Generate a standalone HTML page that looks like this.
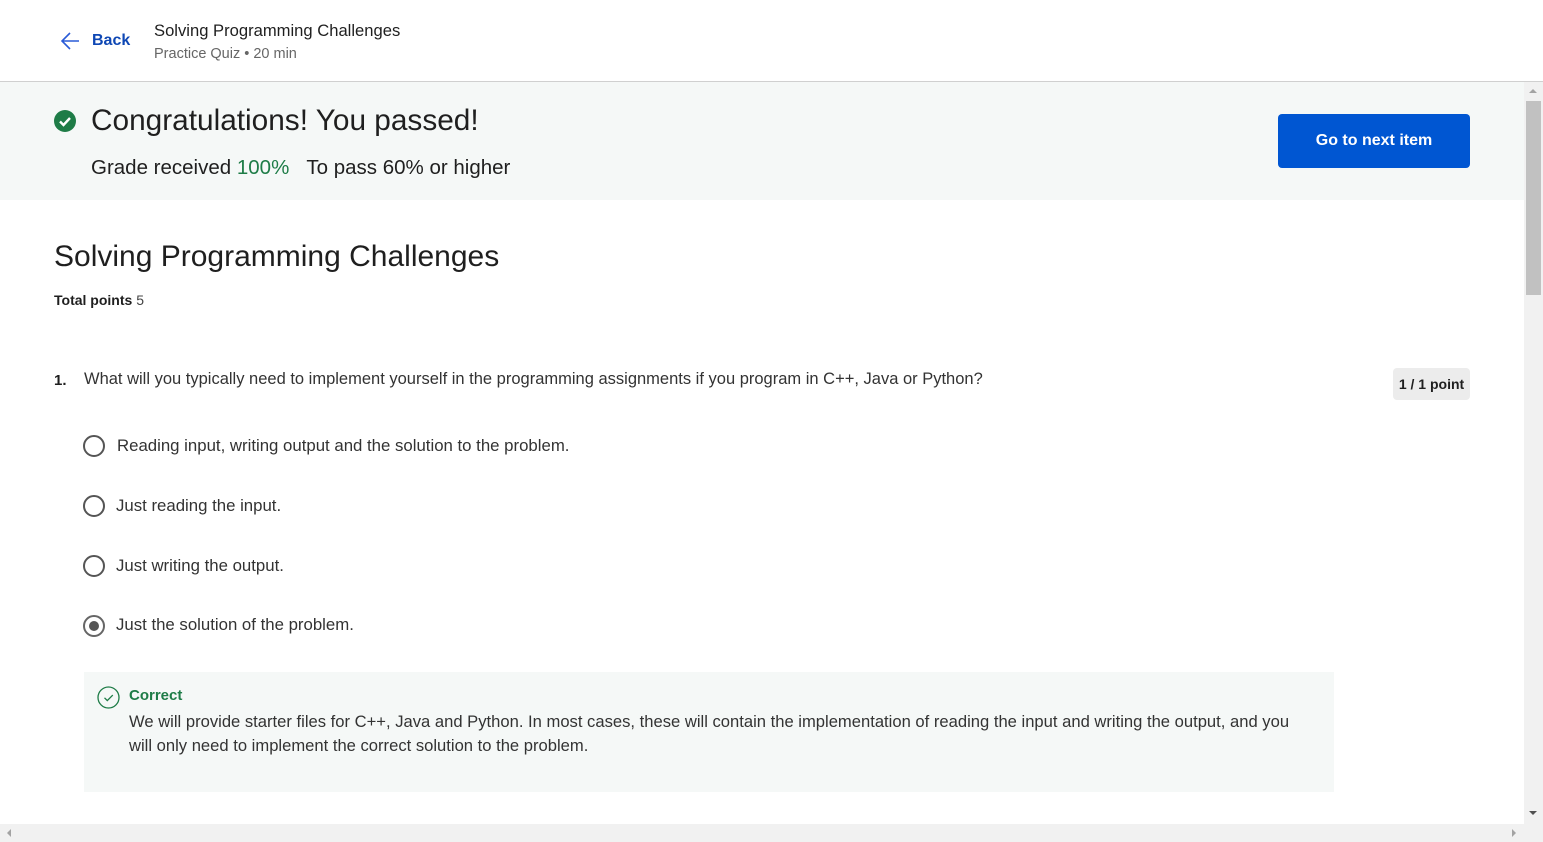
<!DOCTYPE html>
<html><head><meta charset="utf-8"><style>
*{margin:0;padding:0;box-sizing:border-box}
body{width:1543px;height:842px;overflow:hidden;background:#fff;font-family:"Liberation Sans",sans-serif;color:#1f1f1f;position:relative}
.a{position:absolute;white-space:nowrap}
.radio{position:absolute;width:22px;height:22px;border:2px solid #555;border-radius:50%}
.opt{font-size:16.8px;color:#333}
</style></head><body>
<div class="a" style="left:0;top:0;width:1543px;height:82px;border-bottom:1px solid #d0d0d0;background:#fff"></div>
<svg class="a" style="left:60px;top:31px" width="20" height="20" viewBox="0 0 20 20"><path d="M19 10H2M10 2L2 10l8 8" fill="none" stroke="#2a5bd7" stroke-width="1.6"/></svg>
<div class="a" style="left:92px;top:32px;font-size:16px;font-weight:bold;color:#0e47b4">Back</div>
<div class="a" style="left:154px;top:21px;font-size:16.6px;color:#1f1f1f">Solving Programming Challenges</div>
<div class="a" style="left:154px;top:46px;font-size:14.5px;color:#666">Practice Quiz • 20 min</div>

<div class="a" style="left:0;top:82px;width:1524px;height:118px;background:#f5f8f7"></div>
<svg class="a" style="left:54px;top:110px" width="22" height="22" viewBox="0 0 22 22"><circle cx="11" cy="11" r="11" fill="#1e7c47"/><path d="M6 11.5l3.5 3.5L16 8" fill="none" stroke="#fff" stroke-width="2.4"/></svg>
<div class="a" style="left:91px;top:104px;font-size:29.8px;color:#1f1f1f">Congratulations! You passed!</div>
<div class="a" style="left:91px;top:156px;font-size:20.5px;color:#1f1f1f">Grade received <span style="color:#1e7c47">100%</span>&nbsp;&nbsp;&nbsp;To pass 60% or higher</div>
<div class="a" style="left:1278px;top:114px;width:192px;height:54px;background:#0056d2;border-radius:4px;color:#fff;font-weight:bold;font-size:16px;text-align:center;line-height:54px">Go to next item</div>

<div class="a" style="left:54px;top:240px;font-size:30px;color:#1f1f1f">Solving Programming Challenges</div>
<div class="a" style="left:54px;top:292px;font-size:14px"><b>Total points</b> <span style="color:#444">5</span></div>

<div class="a" style="left:54px;top:372px;font-size:15px;font-weight:bold">1.</div>
<div class="a" style="left:84px;top:370px;font-size:16.5px;color:#333">What will you typically need to implement yourself in the programming assignments if you program in C++, Java or Python?</div>
<div class="a" style="left:1393px;top:368px;width:77px;height:32px;background:#ececec;border-radius:4px;font-size:14px;font-weight:bold;text-align:center;line-height:32px">1 / 1 point</div>

<div class="radio" style="left:83px;top:435px"></div><div class="a opt" style="left:117px;top:436px">Reading input, writing output and the solution to the problem.</div>
<div class="radio" style="left:83px;top:495px"></div><div class="a opt" style="left:116px;top:496px">Just reading the input.</div>
<div class="radio" style="left:83px;top:555px"></div><div class="a opt" style="left:116px;top:556px">Just writing the output.</div>
<div class="radio" style="left:83px;top:615px;border-color:#666"><div style="position:absolute;left:4px;top:4px;width:10px;height:10px;border-radius:50%;background:#555"></div></div><div class="a opt" style="left:116px;top:615px">Just the solution of the problem.</div>

<div class="a" style="left:84px;top:672px;width:1250px;height:120px;background:#f5f8f7"></div>
<svg class="a" style="left:97px;top:686px" width="23" height="23" viewBox="0 0 23 23"><circle cx="11.5" cy="11.5" r="10.5" fill="none" stroke="#1e7c47" stroke-width="1.3"/><path d="M7.5 11.8l2.8 2.8 5.5-5.5" fill="none" stroke="#1e7c47" stroke-width="1.3"/></svg>
<div class="a" style="left:129px;top:687px;font-size:15px;font-weight:bold;color:#1e7c47">Correct</div>
<div class="a" style="left:129px;top:710px;font-size:16.6px;color:#333;line-height:24px">We will provide starter files for C++, Java and Python. In most cases, these will contain the implementation of reading the input and writing the output, and you<br>will only need to implement the correct solution to the problem.</div>

<div class="a" style="left:1524px;top:82px;width:19px;height:742px;background:#f1f1f1"></div>
<div class="a" style="left:1526px;top:101px;width:15px;height:194px;background:#c1c1c1"></div>
<div class="a" style="left:1529px;top:89px;width:0;height:0;border:4px solid transparent;border-bottom-color:#a3a3a3;border-top:0"></div>
<div class="a" style="left:1529px;top:811px;width:0;height:0;border:4px solid transparent;border-top-color:#505050;border-bottom:0"></div>
<div class="a" style="left:0;top:824px;width:1543px;height:18px;background:#f1f1f1"></div>
<div class="a" style="left:7px;top:829px;width:0;height:0;border:4px solid transparent;border-right-color:#a3a3a3;border-left:0"></div>
<div class="a" style="left:1512px;top:829px;width:0;height:0;border:4px solid transparent;border-left-color:#a3a3a3;border-right:0"></div>
</body></html>
